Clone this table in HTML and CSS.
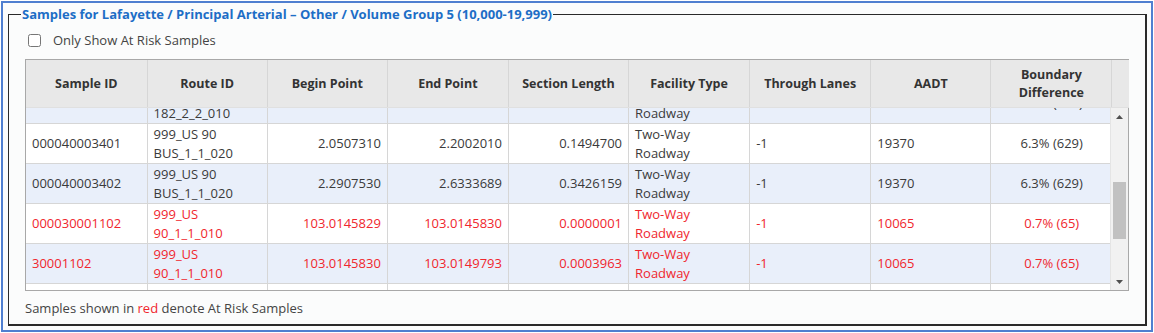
FILE: index.html
```html
<!DOCTYPE html>
<html>
<head>
<meta charset="utf-8">
<link rel="stylesheet" href="styles.css">
</head>
<body>
<div class="frame">
  <fieldset class="group">
    <legend class="group-title">Samples for Lafayette / Principal Arterial – Other / Volume Group 5 (10,000-19,999)</legend>
    <label class="filter"><input type="checkbox" class="filter-box"><span>Only Show At Risk Samples</span></label>
    <div class="grid">
      <table class="grid-head">
        <colgroup>
          <col class="c1"><col class="c2"><col class="c3"><col class="c4"><col class="c5"><col class="c6"><col class="c7"><col class="c8"><col class="c9"><col class="cs">
        </colgroup>
        <tr>
          <th>Sample ID</th><th>Route ID</th><th>Begin Point</th><th>End Point</th><th>Section Length</th><th>Facility Type</th><th>Through Lanes</th><th>AADT</th><th>Boundary<br>Difference</th><th></th>
        </tr>
      </table>
      <div class="grid-body">
        <div class="viewport">
          <table class="rows">
            <colgroup>
              <col class="c1"><col class="c2"><col class="c3"><col class="c4"><col class="c5"><col class="c6"><col class="c7"><col class="c8"><col class="c9">
            </colgroup>
            <tr class="alt">
              <td>000040003302</td><td>999_LA<br>182_2_2_010</td><td class="num">1.7788330</td><td class="num">2.0507310</td><td class="num">0.2718980</td><td>Two-Way<br>Roadway</td><td>-1</td><td>19370</td><td class="ctr">6.3% (629)</td>
            </tr>
            <tr>
              <td>000040003401</td><td>999_US 90<br>BUS_1_1_020</td><td class="num">2.0507310</td><td class="num">2.2002010</td><td class="num">0.1494700</td><td>Two-Way<br>Roadway</td><td>-1</td><td>19370</td><td class="ctr">6.3% (629)</td>
            </tr>
            <tr class="alt">
              <td>000040003402</td><td>999_US 90<br>BUS_1_1_020</td><td class="num">2.2907530</td><td class="num">2.6333689</td><td class="num">0.3426159</td><td>Two-Way<br>Roadway</td><td>-1</td><td>19370</td><td class="ctr">6.3% (629)</td>
            </tr>
            <tr class="risk">
              <td>000030001102</td><td>999_US<br>90_1_1_010</td><td class="num">103.0145829</td><td class="num">103.0145830</td><td class="num">0.0000001</td><td>Two-Way<br>Roadway</td><td>-1</td><td>10065</td><td class="ctr">0.7% (65)</td>
            </tr>
            <tr class="alt risk">
              <td>30001102</td><td>999_US<br>90_1_1_010</td><td class="num">103.0145830</td><td class="num">103.0149793</td><td class="num">0.0003963</td><td>Two-Way<br>Roadway</td><td>-1</td><td>10065</td><td class="ctr">0.7% (65)</td>
            </tr>
            <tr class="risk">
              <td>000030001103</td><td>999_US<br>90_1_1_010</td><td class="num">103.0149793</td><td class="num">103.2209930</td><td class="num">0.2060137</td><td>Two-Way<br>Roadway</td><td>-1</td><td>10065</td><td class="ctr">0.7% (65)</td>
            </tr>
          </table>
        </div>
        <div class="scrollbar">
          <div class="sb-btn"><svg width="7" height="4" viewBox="0 0 7 4"><path d="M0 4 L3.5 0 L7 4 Z" fill="#505050"/></svg></div>
          <div class="sb-track"><div class="sb-thumb"></div></div>
          <div class="sb-btn"><svg width="7" height="4" viewBox="0 0 7 4"><path d="M0 0 L7 0 L3.5 4 Z" fill="#505050"/></svg></div>
        </div>
      </div>
    </div>
    <p class="note">Samples shown in <span class="red">red</span> denote At Risk Samples</p>
  </fieldset>
</div>
<script src="app.js"></script>
</body>
</html>
```

FILE: styles.css
```css
html, body {
  margin: 0;
  padding: 0;
  background: #ffffff;
}
body {
  font-family: "Open Sans", "Noto Sans", sans-serif;
  font-size: 13px;
  color: #3a3a3a;
}
.frame {
  margin: 1px;
  height: 327px;
  border: 2px solid #4f7fd0;
  background: #fbfcfc;
  padding: 0 4px 0 5px;
  box-sizing: content-box;
  width: 1139px;
}
.group {
  margin: 3px 0 0 0;
  padding: 0 16px 7px 16px;
  border: 1px solid #2a2a2a;
  border-right-width: 2px;
  border-bottom-width: 2px;
  min-width: 0;
}
.group-title {
  color: #1d6ec6;
  font-weight: bold;
  font-size: 13px;
  padding: 0 1px;
  margin-left: -4px;
  line-height: 16px;
}
.filter {
  display: flex;
  align-items: center;
  gap: 12px;
  height: 20px;
  margin: 8px 0 9px 0;
  color: #444;
  font-size: 13px;
}
.filter-box {
  margin: 0 0 0 3px;
  width: 13px;
  height: 13px;
}
.grid {
  border: 1px solid #a8a8a8;
  background: #fff;
  display: flex;
  flex-direction: column;
}
table {
  border-collapse: collapse;
  table-layout: fixed;
}
.c1 { width: 121px; }
.c2 { width: 120px; }
.c3 { width: 120px; }
.c4 { width: 121px; }
.c5 { width: 120px; }
.c6 { width: 121px; }
.c7 { width: 121px; }
.c8 { width: 120px; }
.c9 { width: 121px; }
.cs { width: 17px; }
.grid-head {
  width: 1103px;
  background: #e8e8e8;
}
.grid-head th {
  height: 47px;
  padding: 0 4px;
  font-weight: bold;
  font-size: 12.5px;
  line-height: 18px;
  color: #333;
  text-align: center;
  border-left: 1px solid #d6d6d6;
  border-bottom: 1px solid #e0e0e0;
}
.grid-head th:first-child { border-left: none; }
.grid-body {
  display: flex;
  height: 182px;
}
.viewport {
  flex: 1;
  overflow: hidden;
}
.rows {
  width: 1086px;
}
.rows td {
  height: 39px;
  padding: 0 6px;
  line-height: 19px;
  vertical-align: middle;
  border-left: 1px solid #d6d6d6;
  border-top: 1px solid #d6d6d6;
  white-space: nowrap;
  overflow: hidden;
}
.rows td:first-child { border-left: none; }
.rows tr.alt td { background: #e9effa; }
.rows tr.risk td { color: #f0262d; }
.num { text-align: right; }
.ctr { text-align: center; }
.scrollbar {
  width: 17px;
  background: #f1f1f1;
  border-left: 1px solid #e4e4e4;
  display: flex;
  flex-direction: column;
}
.sb-btn {
  height: 17px;
  display: flex;
  align-items: center;
  justify-content: center;
}
.sb-track {
  flex: 1;
  display: flex;
  flex-direction: column;
  padding: 57px 2px 0 2px;
}
.sb-thumb {
  height: 57px;
  background: #c1c1c1;
}
.note {
  margin: 8px 0 0 0;
  line-height: 18px;
  color: #444;
  font-size: 13px;
}
.red { color: #f0262d; }
```

FILE: app.js
```js
document.querySelector('.viewport').scrollTop = 25;
```
